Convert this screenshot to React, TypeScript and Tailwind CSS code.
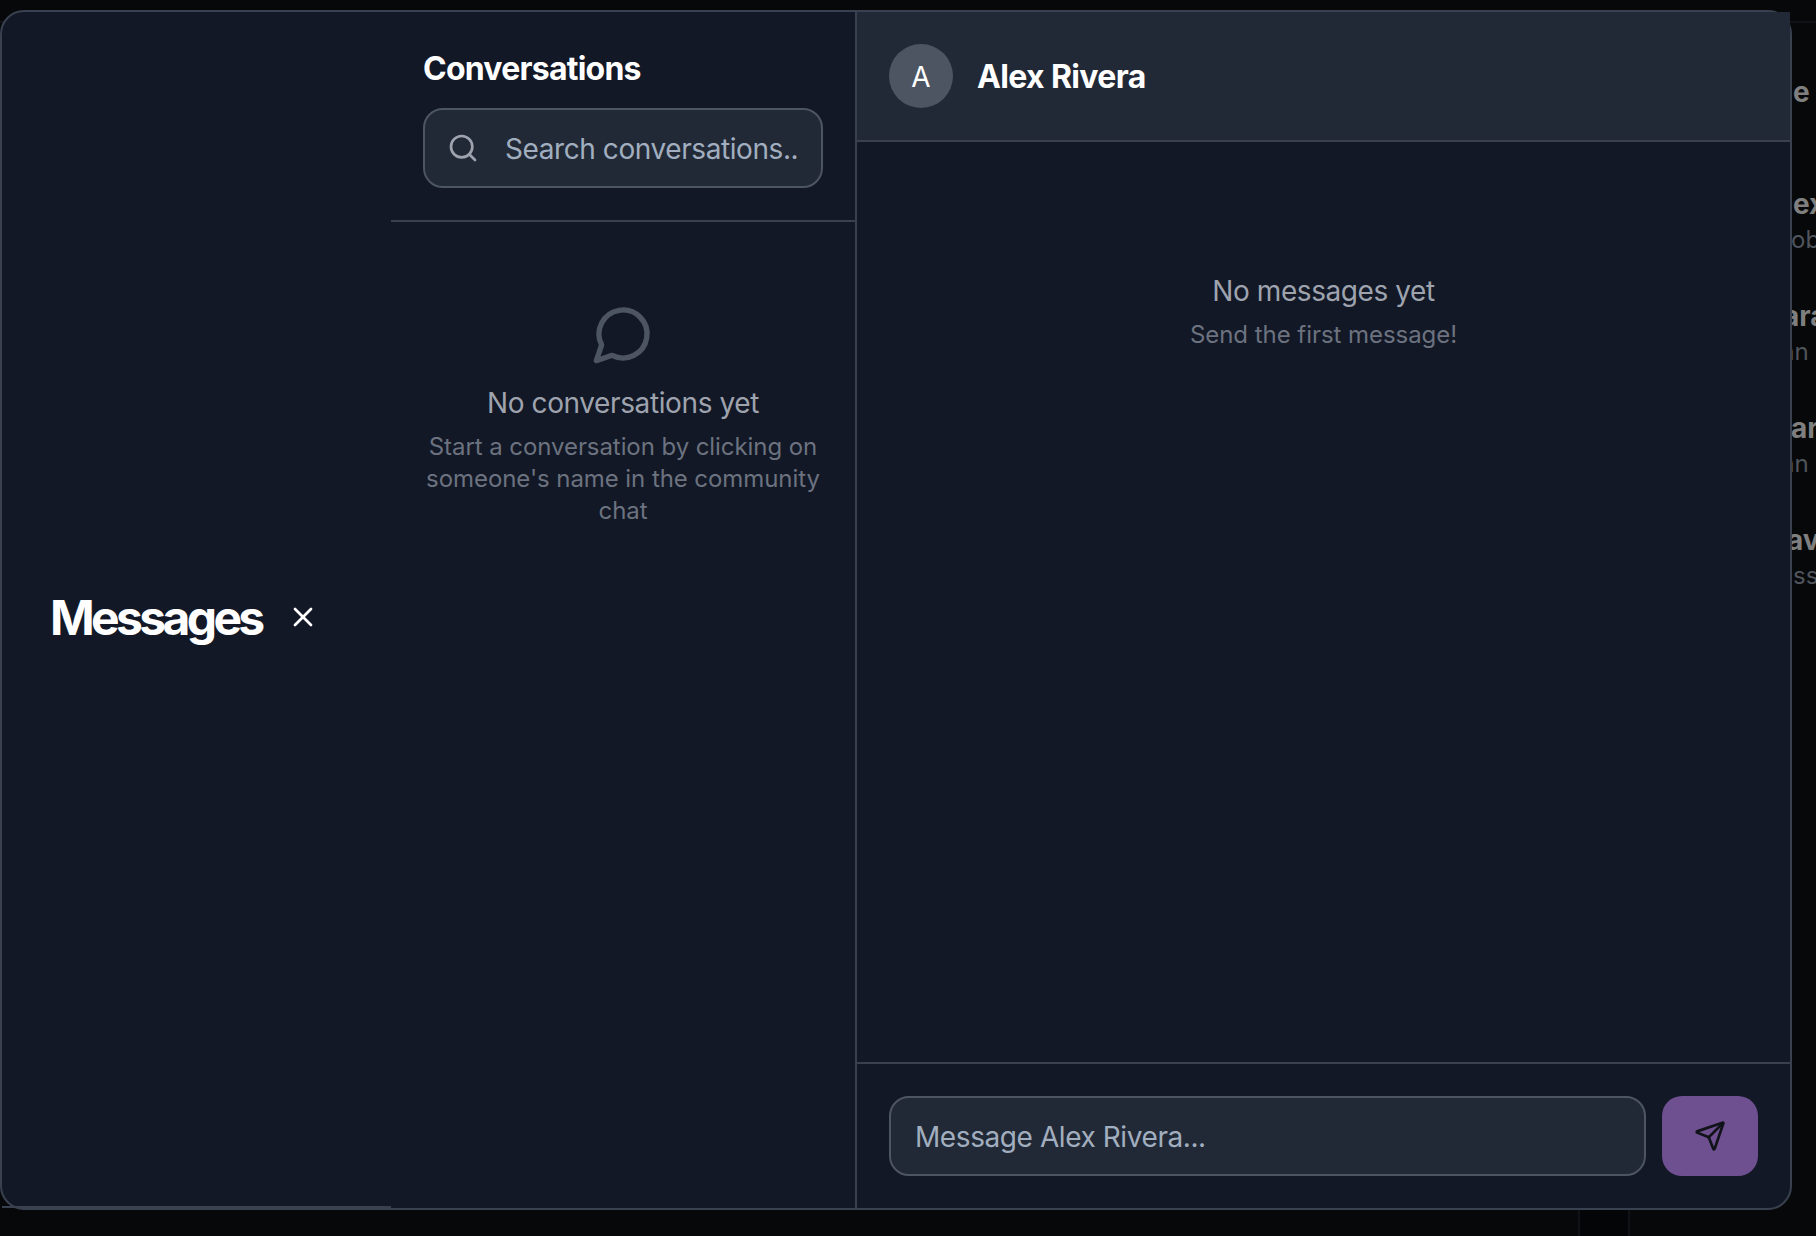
import { Search, X, Send } from "lucide-react";

const people = [
  { name: "ex", role: "ob", nameX: "ml-[1px]", roleX: "-ml-[1px]" },
  { name: "ara", role: "an", nameX: "-ml-[9px]", roleX: "-ml-[11px]" },
  { name: "ar", role: "an", nameX: "-ml-[1px]", roleX: "-ml-[11px]" },
  { name: "av", role: "ss", nameX: "-ml-[5px]", roleX: "ml-[1px]" },
];

function MembersPanel() {
  return (
    <div className="flex h-full flex-col">
      <div className="mt-[21px] h-0.5 bg-[#101218]" />
      <div className="ml-[1792px] flex flex-col">
        <div className="ml-px mt-[49px] h-10 text-[28px] font-[650] leading-10 text-[#7f7f7f]">e</div>
        <div className="mt-[72px] flex flex-col gap-10">
          {people.map((p, i) => (
            <div key={i} className="h-[72px] whitespace-nowrap">
              <div className={`h-10 text-[28px] font-[650] leading-10 text-[#7f7f7f] ${p.nameX}`}>{p.name}</div>
              <div className={`h-8 text-2xl leading-8 text-[#4f545d] ${p.roleX}`}>{p.role}</div>
            </div>
          ))}
        </div>
      </div>
      <div className="ml-[1578px] mt-auto h-[26px] w-[52px] border-x-2 border-[#101218] bg-[#040506]" />
    </div>
  );
}

function ConversationList() {
  return (
    <section className="flex w-[466px] shrink-0 flex-col border-r-2 border-[#394150]">
      <div className="flex h-[210px] flex-col border-b-2 border-[#394150] px-8 pt-8">
        <h2 className="h-[52px] pt-[5px] text-[32px] font-[650] leading-[40px] tracking-[-0.024em] text-white">Conversations</h2>
        <div className="mt-3 flex h-20 items-center rounded-[20px] border-2 border-[#4d5562] bg-[#222936] pl-[22px] pr-6">
          <Search className="size-8 shrink-0 text-[#9ea3ae]" strokeWidth={2} />
          <span className="ml-[26px] w-[294px] whitespace-nowrap pt-0.5 text-[28px] leading-10 tracking-[-0.015em] text-[#a1aebf]">
            Search conversations..
          </span>
        </div>
      </div>
      <div className="flex flex-col items-center px-8 pt-20 text-center">
        <svg className="size-16 text-[#4d5562]" viewBox="0 0 24 24" fill="none" stroke="currentColor" strokeWidth="2" strokeLinecap="round" strokeLinejoin="round">
          <path d="M7.9 20A9 9 0 1 0 4 16.1L2 22Z" />
        </svg>
        <p className="mt-[17px] whitespace-nowrap text-[28px] leading-10 tracking-[-0.014em] text-[#9ea3ae]">No conversations yet</p>
        <p className="mt-2 whitespace-nowrap text-2xl leading-8 tracking-[-0.003em] text-[#6c727f]">
          Start a conversation by clicking on
          <br />
          someone's name in the community
          <br />
          chat
        </p>
      </div>
    </section>
  );
}

function ChatPane() {
  return (
    <section className="flex min-w-0 flex-1 flex-col">
      <header className="flex h-[130px] shrink-0 items-start gap-6 border-b-2 border-[#394150] bg-[#222936] px-8 pt-8">
        <div className="flex size-16 items-center justify-center rounded-full bg-[#4d5562] pt-0.5 text-[28px] text-white">A</div>
        <h3 className="pt-px text-[32px] font-[650] leading-[64px] tracking-[-0.02em] text-white">Alex Rivera</h3>
      </header>
      <div className="flex flex-1 flex-col items-center pt-[129px] text-center">
        <p className="text-[28px] leading-10 tracking-[-0.015em] text-[#9ea3ae]">No messages yet</p>
        <p className="mt-2 text-2xl leading-8 tracking-[-0.002em] text-[#6c727f]">Send the first message!</p>
      </div>
      <footer className="flex h-[146px] shrink-0 gap-4 border-t-2 border-[#394150] px-8 pt-8">
        <div className="flex h-20 flex-1 items-center rounded-[20px] border-2 border-[#4d5562] bg-[#222936] px-6 pt-0.5 text-[28px] tracking-[-0.015em] text-[#a1aebf]">
          Message Alex Rivera...
        </div>
        <button className="flex h-20 w-24 items-center justify-center rounded-[20px] bg-[#6e5090] text-[#101319]">
          <Send className="size-8" strokeWidth={2} />
        </button>
      </footer>
    </section>
  );
}

export default function App() {
  return (
    <div className="relative h-[1236px] w-[1816px] overflow-hidden bg-[#070809] font-['Inter','Liberation_Sans',sans-serif]">
      <MembersPanel />
      <div className="absolute left-0 top-[10px] flex h-[1200px] w-[1792px] rounded-3xl border-2 border-[#394150] bg-[#121826]">
        <div className="flex w-[389px] shrink-0 items-center border-b-2 border-[#394150] pl-12 pt-4">
          <h1 className="w-[213px] whitespace-nowrap pt-0.5 text-[48px] font-bold leading-[64px] tracking-[-0.076em] text-white">Messages</h1>
          <button className="ml-6 text-white">
            <X className="size-8" strokeWidth={2} />
          </button>
        </div>
        <ConversationList />
        <ChatPane />
      </div>
    </div>
  );
}
